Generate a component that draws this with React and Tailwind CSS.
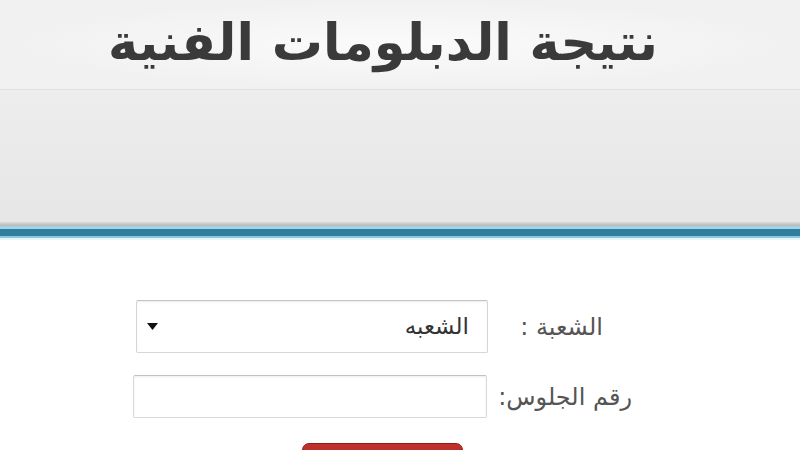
import { useState } from 'react'

const Header = () => (
  <div className="relative h-[222px] bg-gradient-to-b from-[#f3f3f3] via-[#ececec] to-[#e6e6e7]">
    <div className="h-[90px] border-b border-[#dedede] bg-[radial-gradient(ellipse_at_center,#fbfbfb_0%,#f1f1f1_70%)]">
      <h1
        dir="rtl"
        className="pr-[142px] pt-[10px] text-[51px] leading-[66px] font-bold text-[#3a3a3a]"
      >
        نتيجة الدبلومات الفنية
      </h1>
    </div>
  </div>
)

const BlueBar = () => (
  <>
    <div className="h-[4px] bg-gradient-to-b from-[#dcdcdc] to-[#b5b5b5]" />
    <div className="h-[3px] bg-[#9fd3ea]" />
    <div className="h-[7px] bg-[#2f7e9e]" />
    <div className="h-[2px] bg-[#8fc6dc]" />
    <div className="h-[2px] bg-[#e6f7fb]" />
  </>
)

const Arrow = () => (
  <svg width="11" height="7" viewBox="0 0 11 7">
    <path d="M0 0 L11 0 L5.5 7 Z" fill="#111" />
  </svg>
)

export default function App() {
  const [section, setSection] = useState('الشعبه')
  const [seat, setSeat] = useState('')

  return (
    <div
      className="w-[800px] h-[450px] overflow-hidden bg-white"
      style={{ fontFamily: '"DejaVu Sans", sans-serif' }}
    >
      <Header />
      <BlueBar />

      <div className="pt-[60px]">
        <div className="flex items-center justify-end mr-[197px]">
          <div
            dir="rtl"
            className="w-[352px] h-[53px] flex items-center justify-between pr-[18px] pl-[10px] bg-white border border-[#d6d6d6] border-t-[#c4c4c4] rounded-[2px] shadow-[inset_0_1px_2px_rgba(0,0,0,0.08)]"
          >
            <span className="text-[23px] text-[#333]">{section}</span>
            <Arrow />
          </div>
          <span dir="rtl" className="w-[115px] text-[24px] text-[#555]">
            الشعبة :
          </span>
        </div>

        <div className="flex items-center justify-end mr-[168px] mt-[22px]">
          <input
            dir="rtl"
            value={seat}
            onChange={(e) => setSeat(e.target.value)}
            className="w-[354px] h-[43px] bg-white border border-[#d8d8d8] border-t-[#c2c2c2] rounded-[2px] shadow-[inset_0_1px_2px_rgba(0,0,0,0.08)] outline-none px-3"
          />
          <span dir="rtl" className="w-[145px] text-[24px] text-[#555]">
            رقم الجلوس:
          </span>
        </div>

        <div className="mt-[25px] ml-[302px]">
          <button
            onClick={() => setSection('الشعبه')}
            className="w-[161px] h-[44px] rounded-[7px] bg-gradient-to-b from-[#c0302c] to-[#a51f1c] border border-[#8f1a18]"
          />
        </div>
      </div>
    </div>
  )
}
